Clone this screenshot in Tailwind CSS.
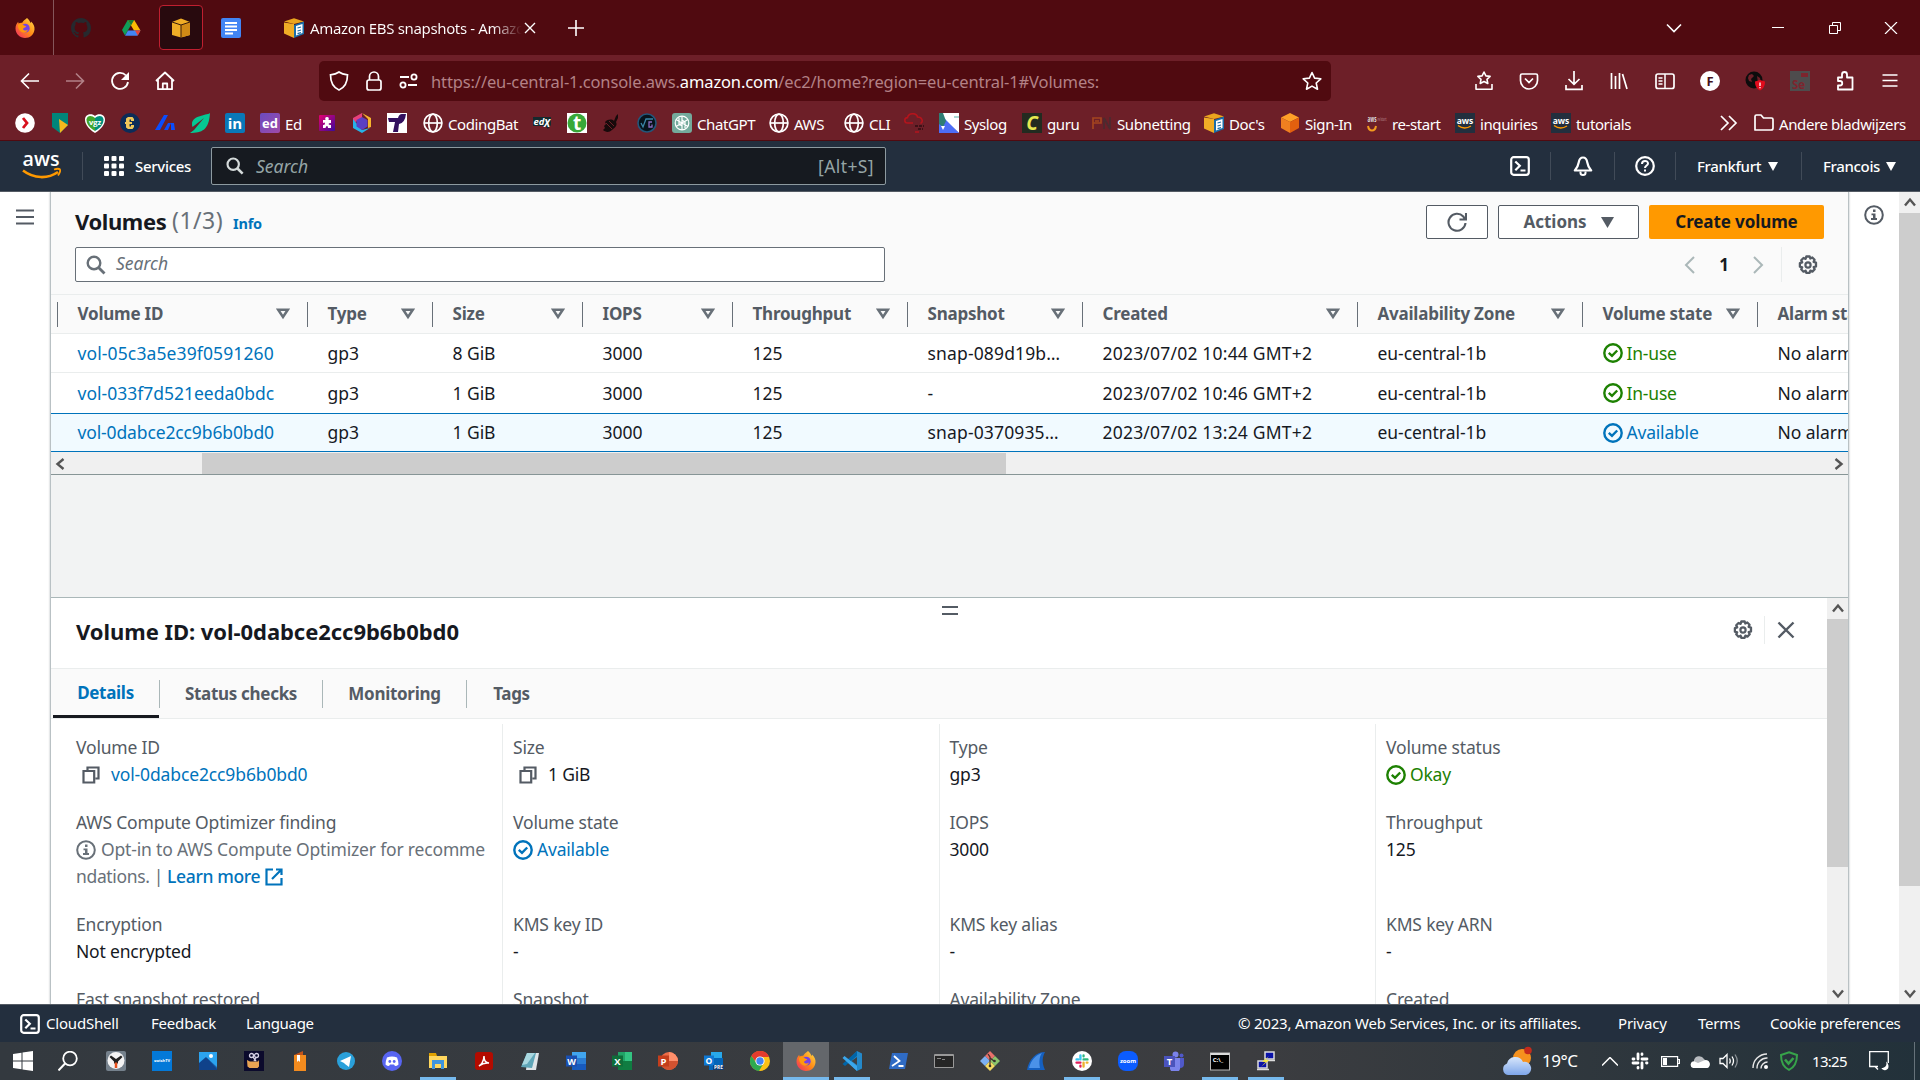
<!DOCTYPE html>
<html lang="en">
<head>
<meta charset="utf-8">
<title>Volumes | EC2 Management Console</title>
<script src="https://cdn.jsdelivr.net/npm/@tailwindcss/browser@4"></script>
</head>
<body class="w-[1920px] h-[1080px] overflow-hidden flex flex-col bg-white text-[#16191f] font-['Noto_Sans','Open_Sans',sans-serif] text-[17px]">

<svg class="absolute w-0 h-0">
  <defs>
    <linearGradient id="ff" x1="1" y1="0" x2="0" y2="1"><stop offset="0" stop-color="#ffe14a"/><stop offset=".5" stop-color="#ff8a16"/><stop offset="1" stop-color="#f0246b"/></linearGradient>
    <linearGradient id="pk" x1="0" y1="0" x2="1" y2="1"><stop offset="0" stop-color="#e6006f"/><stop offset="1" stop-color="#3a0a9c"/></linearGradient>
    <linearGradient id="cl" x1="0" y1="0" x2="0" y2="1"><stop offset="0" stop-color="#d7e6fb"/><stop offset="1" stop-color="#7ea6ea"/></linearGradient>
    <linearGradient id="ed" x1="0" y1="0" x2="1" y2="1"><stop offset="0" stop-color="#6a4bc0"/><stop offset="1" stop-color="#a04aa8"/></linearGradient>
  </defs>
  <symbol id="firefox" viewBox="0 0 20 20"><path fill="url(#ff)" d="M12 0c2 2 3 3 3.500 5C16 4.500 16 4 16 3.500c2.500 2 3.800 5 3.500 8C19 16.500 15 20 10 20S.5 16 .5 10.500C.5 8 1.500 5.500 3.200 3.800L3.500 5.500C4.500 4.800 6 4.500 7.200 4.800 8 3 10 1.500 12 0z"/><circle cx="10.300" cy="10.200" r="4.400" fill="#7542e5"/><path fill="#ff980e" d="M3 7c2-1.500 4.500-1 6 .5 1.200.2 2 .7 2.200 1.300-1.200 1-2.600.8-3.200 2.200.6 1.800 3.400 2 5 .5-.6 3-4 4-6.500 2.500C4 12.500 2.800 10 3 7z"/></symbol>
  <symbol id="github" viewBox="0 0 16 16"><path fill="#26292e" d="M8 0C3.580 0 0 3.580 0 8c0 3.540 2.290 6.530 5.470 7.590.4.070.55-.17.55-.38 0-.19-.01-.82-.01-1.490-2.010.37-2.530-.49-2.690-.94-.09-.23-.48-.94-.82-1.130-.28-.15-.68-.52-.01-.53.63-.01 1.080.58 1.230.82.72 1.210 1.870.87 2.330.66.070-.52.28-.87.51-1.070-1.780-.2-3.640-.89-3.640-3.950 0-.87.31-1.590.82-2.150-.08-.2-.36-1.020.080-2.120 0 0 .67-.21 2.200.82.64-.18 1.320-.27 2-.27s1.360.09 2 .27c1.530-1.040 2.200-.82 2.200-.82.44 1.100.16 1.920.08 2.120.51.56.82 1.270.82 2.150 0 3.070-1.870 3.750-3.650 3.950.29.25.54.73.54 1.480 0 1.070-.01 1.930-.01 2.200 0 .21.15.46.55.38A8.010 8.010 0 0016 8c0-4.420-3.580-8-8-8z"/></symbol>
  <symbol id="drive" viewBox="0 0 20 20"><path fill="#0f9d58" d="M6.700 2 1 12l3 5.500L10 7z"/><path fill="#fbbc04" d="M6.700 2h6.500L19.500 12.500H13z"/><path fill="#4285f4" d="M7 12.500h12.500L16.500 17.700H4z"/><path fill="#ea4335" d="M14 12.500h5.500l-2.700 5z"/><path fill="#188038" d="M6.700 2h6.500L10 7.500z"/></symbol>
  <symbol id="box" viewBox="0 0 20 20"><path fill="#f0ad26" d="M1 4 10 .5 19 4v13l-9 2.500L1 17z"/><path fill="#d08a16" d="m10 7 9-3v13l-9 2.500z"/><path fill="none" stroke="#3a1d0c" d="m1 4 9 3 9-3M10 7v13"/></symbol>
  <symbol id="boxdoc" viewBox="0 0 20 20"><path fill="#f0ad26" d="M0 4.500v11L10 20V6z"/><path fill="#eba51e" d="M0 3.500 10 .2l10 3.300L10 6z"/><path fill="#1b6ea8" d="m10 7 10-3.500V16L10 20z"/><path fill="#fff" d="m12 8 6.500-2v9L12 17.500z"/><path stroke="#1b6ea8" stroke-width="1.200" d="m13.500 10 3.500-1m-3.500 4 3.500-1m-3.500 3.600 3.500-1"/></symbol>
  <symbol id="gdoc" viewBox="0 0 20 20"><rect width="20" height="20" rx="2" fill="#4285f4"/><path stroke="#fff" stroke-width="2" d="M4 5h12M4 8.500h12M4 12h12M4 15.500h8"/></symbol>
  <symbol id="check" viewBox="0 0 20 20"><circle cx="10" cy="10" r="8.700" fill="none" stroke="currentColor" stroke-width="2.400"/><path fill="none" stroke="currentColor" stroke-width="2.400" d="m5.800 9.800 3.200 3 5.200-5.300"/></symbol>
  <symbol id="gear" viewBox="0 0 20 20"><path fill="none" stroke="currentColor" stroke-width="2.300" stroke-linejoin="round" d="M8.300 1.500h3.400l.6 2 2-1 2.300 2.300-1 2 2.400.8v3.800l-2.300.8 1 2-2.300 2.400-2-1-.8 2.300H8.300l-.7-2.200-2.100 1-2.300-2.400 1-2L1.900 11.700V8.100l2.300-.8-1-2L5.500 3l2.100.9z"/><circle cx="10" cy="10" r="2.600" fill="none" stroke="currentColor" stroke-width="2.200"/></symbol>
  <symbol id="info" viewBox="0 0 20 20"><circle cx="10" cy="10" r="8.800" fill="none" stroke="currentColor" stroke-width="2"/><path fill="currentColor" d="M9 4.500h2.500V7H9zM7.500 8.500h4V13H13v2H7v-2h2v-2.800H7.500z"/></symbol>
  <symbol id="copy" viewBox="0 0 18 18"><path fill="none" stroke="currentColor" stroke-width="2.200" d="M5.500 4.500V1.500h11v11h-3M1.500 5h10.700v11.500H1.500z"/></symbol>
  <symbol id="term" viewBox="0 0 20 20"><rect x="1.200" y="1.200" width="17.600" height="17.600" rx="2.500" fill="none" stroke="#fff" stroke-width="2.200"/><path fill="none" stroke="#fff" stroke-width="2.200" d="m5.300 5.500 4.500 4.300-4.500 4.400M10.500 14.500h5"/></symbol>
  <symbol id="lens" viewBox="0 0 20 20"><circle cx="8" cy="8" r="6.300" fill="none" stroke="currentColor" stroke-width="2.400"/><path stroke="currentColor" stroke-width="2.800" d="m12.500 12.500 6 6"/></symbol>
  <symbol id="sort" viewBox="0 0 14 12"><path fill="none" stroke="currentColor" stroke-width="2.500" d="M2.200 1.800h9.600L7 9z"/></symbol>
  <symbol id="up" viewBox="0 0 12 10"><path fill="none" stroke="#555" stroke-width="2.400" d="M1 8.500 6 2.500l5 6"/></symbol>
  <symbol id="globe" viewBox="0 0 20 20"><g fill="none" stroke="#fff" stroke-width="1.700"><circle cx="10" cy="10" r="8.900"/><ellipse cx="10" cy="10" rx="4.300" ry="8.900"/><path d="M1 10h18"/></g></symbol>
  <symbol id="slack" viewBox="0 0 20 20"><g stroke-width="3" stroke-linecap="round"><path stroke="#36c5f0" d="M8 3v5M3 8h2"/><path stroke="#2eb67d" d="M12 8h5M12 3v1"/><path stroke="#ecb22e" d="M12 12v5M16 12h1"/><path stroke="#e01e5a" d="M3 12h5M8 16v1"/></g></symbol>
</svg>

<!-- Tab strip -->
<header class="h-[55px] shrink-0 bg-[#500a10] flex items-center text-white">
  <div class="w-[54px] h-full border-r border-[#85565a] flex items-center justify-center shrink-0 pr-1"><svg class="w-5 h-5"><use href="#firefox"/></svg></div>
  <div class="w-[54px] flex justify-center"><svg class="w-5 h-5"><use href="#github"/></svg></div>
  <div class="w-[46px] flex justify-center"><svg class="w-5 h-5"><use href="#drive"/></svg></div>
  <div class="w-[44px] h-[45px] ml-[5px] rounded-[4px] border border-[#c01f30] bg-[#280a0e] flex items-center justify-center"><svg class="w-[20px] h-[20px]"><use href="#box"/></svg></div>
  <div class="w-[56px] flex justify-center"><svg class="w-5 h-5"><use href="#gdoc"/></svg></div>
  <div class="ml-[25px] w-[252px] flex items-center">
    <svg class="w-5 h-5 shrink-0"><use href="#boxdoc"/></svg>
    <span class="ml-[6px] mt-[2px] w-[212px] overflow-hidden whitespace-nowrap text-[15px] tracking-[-0.350px] bg-gradient-to-r from-white from-86% to-transparent to-100% bg-clip-text text-transparent">Amazon EBS snapshots - Amazo</span>
    <svg class="w-3 h-3 ml-[2px] shrink-0" viewBox="0 0 12 12"><path stroke="#fff" stroke-width="1.400" d="m1 1 10 10M11 1 1 11"/></svg>
  </div>
  <svg class="w-4 h-4 ml-[32px]" viewBox="0 0 16 16"><path stroke="#fff" stroke-width="1.600" d="M8 0v16M0 8h16"/></svg>
  <div class="ml-auto flex items-center pr-[22px]">
    <svg class="w-4 h-4" viewBox="0 0 16 16"><path fill="none" stroke="#fff" stroke-width="1.600" d="m1 4.500 7 7 7-7"/></svg>
    <svg class="w-3 h-3 ml-[90px]" viewBox="0 0 12 12"><path stroke="#fff" d="M0 5.500h12"/></svg>
    <svg class="w-3 h-3 ml-[45px]" viewBox="0 0 12 12"><path fill="none" stroke="#fff" d="M.5 3.500h8v8h-8zM3.500 3.500v-3h8v8h-3"/></svg>
    <svg class="w-[14px] h-3 ml-[43px]" viewBox="0 0 14 12"><path stroke="#fff" stroke-width="1.200" d="m1 0 12 12M13 0 1 12"/></svg>
  </div>
</header>

<!-- Address bar -->
<div class="h-[51px] shrink-0 bg-[#6d1f28] flex items-center text-white">
  <div class="flex items-center gap-[25px] pl-[20px] w-[319px]">
    <svg class="w-5 h-5" viewBox="0 0 20 20"><path fill="none" stroke="#fff" stroke-width="1.600" d="M19 10H2m7-7.500L1.500 10 9 17.500"/></svg>
    <svg class="w-5 h-5" viewBox="0 0 20 20"><path fill="none" stroke="#b28087" stroke-width="1.600" d="M1 10h17m-7-7.500 7.500 7.500-7.500 7.500"/></svg>
    <svg class="w-5 h-5" viewBox="0 0 20 20"><path fill="none" stroke="#fff" stroke-width="1.800" d="M18 11a8 8 0 1 1-2-6.500"/><path fill="#fff" d="M19 1v8h-8z"/></svg>
    <svg class="w-5 h-5" viewBox="0 0 20 20"><path fill="none" stroke="#fff" stroke-width="1.800" stroke-linejoin="round" d="m1 10 9-8.500 9 8.500M3 8.500v9.700h14V8.500M7.800 18v-5.500h4.400V18"/></svg>
  </div>
  <div class="w-[1012px] h-10 rounded-[5px] bg-[#500a10] flex items-center pl-[10px] pr-[9px]">
    <svg class="w-5 h-5" viewBox="0 0 20 20"><path fill="none" stroke="#fff" stroke-width="1.700" d="M10 1c2.500 1.800 5.500 2.500 8.500 2.800C18.500 11 16 16.500 10 19 4 16.500 1.500 11 1.500 3.800 4.500 3.500 7.500 2.800 10 1z"/></svg>
    <svg class="w-5 h-5 ml-[15px]" viewBox="0 0 20 20"><path fill="none" stroke="#fff" stroke-width="1.700" d="M5.500 9V5.500a4.500 4.500 0 0 1 9 0V9"/><rect x="3" y="9" width="14" height="10" rx="2" fill="none" stroke="#fff" stroke-width="1.700"/></svg>
    <svg class="w-5 h-5 ml-[15px]" viewBox="0 0 20 20"><g fill="none" stroke="#fff" stroke-width="1.800"><path d="M1 6h9M9 14h9"/><circle cx="15" cy="6" r="2.600"/><circle cx="4" cy="14" r="2.600"/></g></svg>
    <span class="ml-[12px] mt-[3px] whitespace-nowrap text-[16.500px] tracking-[-0.120px] text-[#b38186]">https://eu-central-1.console.aws.<span class="text-white">amazon.com</span>/ec2/home?region=eu-central-1#Volumes:</span>
    <svg class="w-5 h-5 ml-auto" viewBox="0 0 20 20"><path fill="none" stroke="#fff" stroke-width="1.600" stroke-linejoin="round" d="m10 1.500 2.600 5.600 6.200.7-4.600 4.200 1.300 6.200-5.500-3.100-5.500 3.100 1.300-6.200L1.200 7.800l6.200-.7z"/></svg>
  </div>
  <div class="ml-auto flex items-center gap-[25.100px] pr-[20px]">
    <svg class="w-5 h-5" viewBox="0 0 20 20"><path fill="none" stroke="#fff" stroke-width="1.600" stroke-linejoin="round" d="m10 1 1.900 3.900 4.200.5-3.100 2.900.8 4.200L10 10.500l-3.800 2 .8-4.200-3.100-2.900 4.200-.5zM2 13v5.300h16V13"/></svg>
    <svg class="w-5 h-5" viewBox="0 0 20 20"><path fill="none" stroke="#fff" stroke-width="1.700" d="M1.500 4.500q0-1.500 1.500-1.500h14q1.500 0 1.500 1.500v5a8.500 8.500 0 0 1-17 0zM6 7.500l4 4 4-4"/></svg>
    <svg class="w-5 h-5" viewBox="0 0 20 20"><path fill="none" stroke="#fff" stroke-width="1.700" d="M10 0v13M4.500 8l5.500 5.300L15.500 8M2 14v4.300h16V14"/></svg>
    <svg class="w-5 h-5" viewBox="0 0 20 20"><path fill="none" stroke="#fff" stroke-width="1.700" d="M2.500 2v16M6.500 5v13M10.500 2v16M13.500 3l4.500 15"/></svg>
    <svg class="w-5 h-5" viewBox="0 0 20 20"><rect x="1" y="3" width="18" height="14.500" rx="2" fill="none" stroke="#fff" stroke-width="1.700"/><path stroke="#fff" stroke-width="1.500" d="M10 3v14M3.500 7h4M3.500 10h4M3.500 13h4"/></svg>
    <svg class="w-5 h-5" viewBox="0 0 20 20"><circle cx="10" cy="10" r="10" fill="#fff"/><text x="10" y="14.800" text-anchor="middle" font-size="13" font-weight="700" fill="#44101a" font-family="Open Sans">F</text></svg>
    <svg class="w-5 h-5" viewBox="0 0 20 20"><circle cx="9" cy="9" r="8.500" fill="#0c0c0c"/><path fill="#6d1f28" d="m4 4 3-1 2 2-3 3 1 3-3-1-1-3zM12 5l3 2 1 4-3 1z"/><path fill="#e00b1c" d="M10 10.500 15 9l5 1.500c0 4-1.500 7.500-5 9-3.500-1.500-5-5-5-9z"/><path stroke="#fff" stroke-width="1.300" d="M15 11.500v3.500M15 16v1.300"/></svg>
    <svg class="w-5 h-5" viewBox="0 0 20 20"><rect width="20" height="20" fill="#4e4c4d"/><rect x="11" y="2" width="7" height="4" fill="#7d252e"/><text x="2" y="17.500" font-size="11.500" font-weight="700" fill="#7d252e" font-family="Open Sans">Se</text></svg>
    <svg class="w-5 h-5" viewBox="0 0 20 20"><path fill="none" stroke="#fff" stroke-width="1.800" stroke-linejoin="round" d="M7 6.500V3.500a2.500 2.500 0 0 1 5 0v3h5.500V18.500H3V14.500h2a2 2 0 0 0 0-4.500H3V6.500z"/></svg>
    <svg class="w-5 h-5" viewBox="0 0 20 20"><path stroke="#fff" stroke-width="1.700" d="M2.500 4h15M2.500 9.500h15M2.500 15h15"/></svg>
  </div>
</div>

<!-- Bookmarks -->
<div id="bookmarks" class="h-[35px] shrink-0 bg-[#6d1f28] border-b border-[#500a10] flex items-center pl-[15px] text-white text-[15px] tracking-[-0.400px]"></div>

<!-- AWS navigation -->
<nav class="h-[51px] shrink-0 bg-[#232f3e] border-b border-[#545b64] flex items-center text-white text-[15px]">
  <svg class="w-10 h-7 ml-[22px]" viewBox="0 0 40 28"><text x="0.500" y="13.500" font-size="20" textLength="37" lengthAdjust="spacingAndGlyphs" fill="#fff" font-family="Open Sans" font-weight="600">aws</text><path fill="none" stroke="#f90" stroke-width="2.600" d="M1 18.500c11 8.500 25 8.500 35 1.500"/><path fill="none" stroke="#f90" stroke-width="1.800" d="M32 17.500c3-1 5-1 6 0 .5 1.500-.5 4-2 6"/></svg>
  <div class="w-px h-7 bg-[#414b58] ml-[20px]"></div>
  <svg class="w-5 h-5 ml-[21px]" viewBox="0 0 20 20"><g fill="#fff"><rect width="5" height="5" rx="1"/><rect x="7.500" width="5" height="5" rx="1"/><rect x="15" width="5" height="5" rx="1"/><rect y="7.500" width="5" height="5" rx="1"/><rect x="7.500" y="7.500" width="5" height="5" rx="1"/><rect x="15" y="7.500" width="5" height="5" rx="1"/><rect y="15" width="5" height="5" rx="1"/><rect x="7.500" y="15" width="5" height="5" rx="1"/><rect x="15" y="15" width="5" height="5" rx="1"/></g></svg>
  <span class="ml-[11px] w-[66px] mt-px font-medium tracking-[-0.300px]">Services</span>
  <div class="ml-[10px] w-[675px] h-[38px] rounded-[2px] border border-[#8d9aa0] bg-[#161a20] flex items-center pl-[14px] pr-[11px] text-[17.500px] text-[#95a5a6]">
    <svg class="w-[18px] h-[18px] text-[#d5dbdb]"><use href="#lens" width="18" height="18"/></svg>
    <span class="ml-[12px] italic">Search</span>
    <span class="ml-auto tracking-[0.400px]">[Alt+S]</span>
  </div>
  <div class="ml-auto flex items-center h-full font-medium tracking-[-0.350px]">
    <svg class="w-5 h-5"><use href="#term"/></svg>
    <div class="w-px h-7 bg-[#414b58] ml-[20px]"></div>
    <svg class="w-5 h-5 ml-[22px]" viewBox="0 0 20 20"><path fill="none" stroke="#fff" stroke-width="2.200" stroke-linejoin="round" d="M10 1.500c-2.500 0-3.800 2-4.300 5C5.200 10 4 12 1.800 14.500h16.400C16 12 14.800 10 14.300 6.500c-.5-3-1.800-5-4.300-5z"/><path fill="none" stroke="#fff" stroke-width="2" d="M7.500 15.500v1.500q0 2 2.500 2t2.500-2v-1.500"/></svg>
    <div class="w-px h-7 bg-[#414b58] ml-[21px]"></div>
    <svg class="w-5 h-5 ml-[20px]" viewBox="0 0 20 20"><circle cx="10" cy="10" r="8.800" fill="none" stroke="#fff" stroke-width="2.200"/><path fill="none" stroke="#fff" stroke-width="2" d="M7 8c0-4 6-4 6-.5 0 2-3 2-3 4.500M10 13.500v2"/></svg>
    <div class="w-px h-7 bg-[#414b58] ml-[20px]"></div>
    <span class="ml-[21px] w-[66px] mt-px">Frankfurt</span><svg class="w-[10px] h-[9px] ml-[5px]" viewBox="0 0 10 9"><path fill="#fff" d="M0 0h10L5 9z"/></svg>
    <div class="w-px h-7 bg-[#414b58] ml-[23px]"></div>
    <span class="ml-[21px] w-[58px] mt-px">Francois</span><svg class="w-[10px] h-[9px] ml-[5px] mr-[24px]" viewBox="0 0 10 9"><path fill="#fff" d="M0 0h10L5 9z"/></svg>
  </div>
</nav>

<!-- Console -->
<div class="h-[812px] shrink-0 flex overflow-hidden text-[17px]">
  <aside class="w-[50px] shrink-0 flex justify-center pt-[17px]">
    <svg class="w-[18px] h-4" viewBox="0 0 18 16"><path stroke="#545b64" stroke-width="2" d="M0 1.500h18M0 8h18M0 14.500h18"/></svg>
  </aside>

  <main class="w-[1799px] shrink-0 border-x border-[#b9c1c4] bg-[#f2f3f3] flex flex-col overflow-hidden shadow-[0_0_2px_rgba(0,28,36,.3)]">
    <section class="shrink-0 bg-[#fafafa] border-b border-[#879596]">
      <div class="h-[102px] pl-[24px] pr-[24px] pt-[13px] flex flex-col">
        <div class="flex items-center h-[34px]">
          <h1 class="text-[22px] font-bold tracking-[-0.400px] leading-none w-[97px] mb-[3px]">Volumes</h1>
          <span class="text-[23px] leading-none text-[#687078] w-[61px] mb-[3px] tracking-[0.500px]">(1/3)</span>
          <a class="text-[14.500px] font-bold text-[#0073bb] mt-[4px] tracking-[-0.200px]">Info</a>
          <div class="ml-auto flex gap-[10px] font-bold text-[#545b64]">
            <button class="w-[62px] h-[34px] border border-[#545b64] rounded-[2px] bg-white flex items-center justify-center"><svg class="w-5 h-5" viewBox="0 0 20 20"><path fill="none" stroke="currentColor" stroke-width="2.100" d="M18.500 11a8.500 8.500 0 1 1-2.200-6.500l1.500 2.500M19 1v6.500h-6.500"/></svg></button>
            <button class="w-[141px] h-[34px] border border-[#545b64] rounded-[2px] bg-white flex items-center justify-center gap-[14px]">Actions<svg class="w-[13px] h-[11px]" viewBox="0 0 13 11"><path fill="currentColor" d="M0 0h13L6.500 11z"/></svg></button>
            <button class="w-[175px] h-[34px] rounded-[2px] bg-[#ff9900] text-[#16191f] tracking-[-0.100px]">Create volume</button>
          </div>
        </div>
        <div class="flex items-center h-[35px] mt-[8px]">
          <div class="w-[810px] h-[35px] border border-[#687078] rounded-[2px] bg-white flex items-center pl-[10px] text-[#687078]"><svg class="w-5 h-5"><use href="#lens"/></svg><span class="italic ml-[10px] mb-[2px] text-[17.500px]">Search</span></div>
          <svg class="w-[11px] h-[18px] ml-auto" viewBox="0 0 11 18"><path fill="none" stroke="#aab7b8" stroke-width="2" d="M10 1 2 9l8 8"/></svg>
          <span class="font-bold w-[58px] text-center">1</span>
          <svg class="w-[11px] h-[18px]" viewBox="0 0 11 18"><path fill="none" stroke="#aab7b8" stroke-width="2" d="m1 1 8 8-8 8"/></svg>
          <div class="w-px h-[35px] bg-[#eaeded] ml-[17px]"></div>
          <svg class="w-5 h-5 text-[#545b64] ml-[16px] mr-[6px]"><use href="#gear"/></svg>
        </div>
      </div>
      <div id="thead" class="h-[40px] border-y border-[#eaeded] flex items-center pl-[6px] font-bold text-[#545b64] overflow-hidden tracking-[-0.220px]"></div>
      <div id="tbody" class="text-[17.500px]"></div>
      <div class="h-[22px] pt-px bg-[#f0f0f0] flex items-center">
        <svg class="w-3 h-[10px] -rotate-90 ml-[3px]"><use href="#up"/></svg>
        <div class="ml-[136px] w-[804px] h-full bg-[#cdcdcd]"></div>
        <svg class="w-3 h-[10px] rotate-90 ml-auto mr-[3px]"><use href="#up"/></svg>
      </div>
    </section>

    <section class="mt-[122px] flex-1 min-h-0 border-t border-[#aab7b8] bg-white flex">
      <div class="w-[1776px] shrink-0 flex flex-col relative">
        <svg class="absolute left-[891px] top-[8px] w-4 h-[9px]" viewBox="0 0 16 9"><path stroke="#545b64" stroke-width="2" d="M0 1h16M0 8h16"/></svg>
        <div class="h-[70px] shrink-0 flex items-center pl-[25px] pr-[32px]">
          <h2 class="text-[22px] font-bold tracking-[-0.050px] whitespace-nowrap mb-[4px]">Volume ID: vol-0dabce2cc9b6b0bd0</h2>
          <svg class="w-5 h-5 ml-auto mb-[6px] text-[#545b64]"><use href="#gear"/></svg>
          <div class="w-px h-7 bg-[#eaeded] ml-[11px] mb-[6px]"></div>
          <svg class="w-[18px] h-[18px] ml-[12px] mb-[6px]" viewBox="0 0 18 18"><path stroke="#545b64" stroke-width="2.400" d="m1.500 1.500 15 15M16.500 1.500l-15 15"/></svg>
        </div>
        <div class="h-[51px] shrink-0 border-y border-[#eaeded] bg-[#fafafa] flex items-center pl-[2px] font-bold text-[#545b64] text-[17px] tracking-[-0.300px]">
          <div class="relative w-[106px] h-[49px] flex items-center justify-center text-[#0073bb] border-b-[3px] border-[#16191f] pt-[2px] pr-px">Details</div>
          <div class="w-[163px] h-[28px] flex items-center justify-center border-l border-[#aab7b8]">Status checks</div>
          <div class="w-[144px] h-[28px] flex items-center justify-center border-l border-[#aab7b8]">Monitoring</div>
          <div class="w-[90px] h-[28px] flex items-center justify-center border-l border-[#aab7b8]">Tags</div>
        </div>
        <div id="details" class="flex-1 min-h-0 overflow-hidden flex pl-[25px] pt-[5px] text-[17.500px]"></div>
      </div>
      <div class="w-[21px] shrink-0 bg-[#f0f0f0] flex flex-col items-center">
        <svg class="w-3 h-[10px] mt-[5px]"><use href="#up"/></svg>
        <div class="w-full h-[248px] mt-[6px] bg-[#cdcdcd]"></div>
        <svg class="w-3 h-[10px] mt-auto mb-[5px] rotate-180"><use href="#up"/></svg>
      </div>
    </section>
  </main>

  <aside class="w-[50px] shrink-0 flex justify-center pt-[13px] text-[#545b64]"><svg class="w-5 h-5"><use href="#info"/></svg></aside>
  <div class="w-[21px] shrink-0 bg-[#f0f0f0] flex flex-col items-center">
    <svg class="w-3 h-[10px] mt-[5px]"><use href="#up"/></svg>
    <div class="w-full h-[673px] mt-[6px] bg-[#cdcdcd]"></div>
    <svg class="w-3 h-[10px] mt-auto mb-[5px] rotate-180"><use href="#up"/></svg>
  </div>
</div>

<!-- Console footer -->
<footer class="h-[38px] shrink-0 bg-[#232f3e] border-t border-[#545b64] flex items-center pl-[20px] pr-[20px] text-white text-[15px] tracking-[-0.200px] whitespace-nowrap">
  <svg class="w-5 h-5 mr-[6px]"><use href="#term"/></svg>
  <span class="w-[105px]">CloudShell</span><span class="w-[95px]">Feedback</span><span class="tracking-[-0.300px]">Language</span>
  <span class="ml-auto w-[380px]">© 2023, Amazon Web Services, Inc. or its affiliates.</span><span class="w-[80px]">Privacy</span><span class="w-[72px]">Terms</span><span class="w-[130px] tracking-[-0.280px]">Cookie preferences</span>
</footer>

<!-- Taskbar -->
<div class="h-[38px] shrink-0 bg-gradient-to-r from-[#33393f] via-[#3c3d40] via-65% to-[#22313a] flex items-center text-white">
  <div id="taskbar" class="flex h-full"></div>
  <div class="ml-auto flex items-center h-full text-[17px]">
    <svg class="w-[30px] h-[30px] mr-[10px]" viewBox="0 0 30 30"><circle cx="20" cy="12" r="9" fill="#f6921e"/><circle cx="26" cy="4.500" r="3.800" fill="#c42b1c"/><path fill="url(#cl)" d="M6 29a6 6 0 0 1-1-11.500 8.500 8.500 0 0 1 16-1.500A6.500 6.500 0 0 1 24 29z"/></svg>
    <span class="w-[60px] tracking-[-0.500px]">19°C</span>
    <svg class="w-4 h-[9px]" viewBox="0 0 16 9"><path fill="none" stroke="#fff" stroke-width="1.500" d="m0 8.500 8-8 8 8"/></svg>
    <svg class="w-[18px] h-[18px] ml-[13px]" viewBox="0 0 18 18"><g stroke="#fff" stroke-width="2.800" stroke-linecap="round"><path d="M7 2v5M2 7h1M11 7h5M11 2v.5M11 11v5M16 11h-.5M2 11h5M7 16v-.5"/></g></svg>
    <svg class="w-[19px] h-[11px] ml-[12px]" viewBox="0 0 19 11"><path fill="none" stroke="#fff" stroke-width="1.200" d="M.6.600h16v9.800H.6zM17 3.500h1.400v4H17"/><path fill="#fff" d="M2 2h4v7H2z"/></svg>
    <svg class="w-5 h-[13px] ml-[10px]" viewBox="0 0 20 13"><path fill="#b9bcc0" d="M4 5a5.500 5.500 0 0 1 10-1l3 3-13 5z"/><path fill="#fff" d="M3 13a3.500 3.500 0 0 1 1-6.800L8 8l6-2.500a4 4 0 0 1 3.500 7.500z"/></svg>
    <svg class="w-5 h-4 ml-[9px]" viewBox="0 0 20 16"><path fill="none" stroke="#fff" stroke-width="1.300" d="M1 5.500h3l4-4v13l-4-4H1zM10.500 5.500q1.500 2.500 0 5M13 3.500q3 4.500 0 9"/><path fill="none" stroke="#8b9196" stroke-width="1.300" d="M16 1.500q4.500 6.500 0 13"/></svg>
    <svg class="w-4 h-4 ml-[13px]" viewBox="0 0 16 16"><g fill="none" stroke="#e8e8e8" stroke-width="1.400"><path d="M1 15A14 14 0 0 1 15 1M5 15.500A10 10 0 0 1 15.500 5M9 15.500A6.500 6.500 0 0 1 15.500 9"/></g><circle cx="14" cy="14" r="2" fill="#fff"/></svg>
    <svg class="w-[18px] h-5 ml-[12px]" viewBox="0 0 18 20"><path fill="none" stroke="#37a34a" stroke-width="2" d="M9 1.200 17 4c0 7-2 12-8 14.800C3 16 1 11 1 4z"/><path fill="none" stroke="#37a34a" stroke-width="2.600" d="m5 8.500 3.500 4L13.500 7"/></svg>
    <span class="ml-[14px] w-[57px] text-[15px] tracking-[-0.700px]">13:25</span>
    <svg class="w-5 h-5" viewBox="0 0 20 20"><path fill="none" stroke="#fff" stroke-width="1.300" d="M9 15.500H.700V.700h18.600V12M6 15.500l3 3"/><path fill="#fff" d="M17 10.500c1.500 4-1 6.500-4.500 6.500 1 3 6.500 3 7 -1 .2-2.500-1-4.500-2.500-5.500z"/></svg>
    <div class="w-px h-full bg-[#66727a] ml-[25px] mr-[5px]"></div>
  </div>
</div>

<script>
const txt = (s, x, y, size, fill, extra = '') => `<text x="${x}" y="${y}" font-size="${size}" fill="${fill}" letter-spacing="0" font-family="Open Sans, sans-serif" font-weight="700" text-anchor="middle" ${extra}>${s}</text>`;
const art = {
  chev: '<circle cx="10" cy="10" r="9.800" fill="#fff"/><path fill="none" stroke="#d8101c" stroke-width="2.800" d="m8 5 4 5-4 5"/>',
  pennant: '<path fill="#00857a" d="M2 0h16v12l-8 8-8-6z"/><path fill="#f5b81c" d="m9 6 9 6-8 8z"/>',
  heart: '<path fill="#fff" d="M10 20C2 15 0 10 0 6.500 0 1 7 0 10 3c3-3 10-2 10 3.500 0 3.500-2 8.500-10 13.500z"/><path fill="#42a62a" d="M10 18C3 14 1.500 10 1.500 6.500 2 2 7 2 10 5z"/><path fill="#008f7c" d="M10 18c7-4 8.500-8 8.500-11.500C18 2 13 2 10 5z"/>' + txt('vgz', 10, 11.5, 7.5, '#fff'),
  bit: '<circle cx="10" cy="10" r="10" fill="#0c2c58"/><path fill="#efc75a" d="M8 4h4.500L14 6v2h-3V6.500H9.500V9H12v2H9.500v2.500H11V12h3v2l-1.500 2H8l-2-1.500V11H5V9h1V5.500z"/>',
  slashes: '<path fill="#0a4dff" d="M9 2h4L5 17H0zM13 10h3l-3 7h-4zM16 10h3l1 7h-4z"/>',
  leaf: '<path fill="#05c793" d="M20 0c-1 2-18 2-18 11 0 1 0 2 .5 3L14 5 4 17l-4 3c12 0 19-3 20-20z"/>',
  lin: '<rect width="20" height="20" rx="2" fill="#0a78b8"/>' + txt('in', 10, 16, 15, '#fff'),
  ed: '<rect width="20" height="20" rx="2" fill="url(#ed)"/>' + txt('ed', 10, 14.5, 13, '#fff'),
  puzzle: '<rect x="2" y="2" width="16" height="16" rx="1" fill="url(#pk)"/><path fill="#fff" d="M6 7h2.500q-1-3 1.500-3t1.500 3H14v3q-2.500 0-2.500 1t2.500 1v3h-3q0-2-1-2t-1.500 2H6v-3q2 0 2-1.500T6 10z"/>',
  hex: '<path fill="#e8407c" d="M10 0 1 5v5l9-4z"/><path fill="#f7b52c" d="m10 0 9 5v9l-3 1V6z"/><path fill="#27b3e8" d="M1 6v9l9 5 8-5-8 2z"/><path fill="#5b3fc4" d="m10 4 5.500 3v6.500L10 17l-5.500-3.500V7z"/>',
  zed: '<rect width="20" height="20" fill="#fff"/><path fill="#33105f" d="M1 5h10q1-4 4-4h4q-1 9-7 10l-1 8H6l2-10H2z"/>',
  edx: '<path fill="#152a2e" d="M1 4h18v8l-3 4-3-3H1z"/>' + txt('ed', 7, 12, 9.5, '#fff', 'font-style="italic"') + txt('X', 15, 13.5, 10, '#fff', 'font-style="italic"'),
  tt: '<rect width="20" height="20" fill="#fff"/><circle cx="10" cy="10" r="9.500" fill="#38a838"/>' + txt('t', 10, 16.5, 19, '#fff'),
  bee: '<path fill="#170a0b" d="M4 9c3-3 7-3 9-1l2-5 2-2v4l-2 4c2 4-2 6-4 8-3 3-7 2-9 0l2-2-1-2 2-2z"/><path stroke="#6d1f28" d="M5 10l6 6M8 8l5 5"/>',
  root: '<circle cx="10" cy="10" r="9" fill="#07141c" stroke="#22567a" stroke-width="1.600"/><path fill="none" stroke="#3b86a8" stroke-width="1.300" d="m4 10 2 4 3-8h7"/><path fill="none" stroke="#8c6ac0" stroke-width="1.300" d="M15 9h-3v5h3v-2.500"/>',
  gpt: '<rect width="20" height="20" rx="3" fill="#74aa9c"/><g fill="none" stroke="#fff" stroke-width="1.200"><circle cx="10" cy="10" r="6.800"/><path d="M10 3v7l6 3.500M10 17v-7L4 6.500M4 13.500l6-3.500 6-3.500M7 5v6l3 2M13 15V9l-3-2"/></g>',
  globe: '<use href="#globe"/>',
  redcloud: '<path fill="none" stroke="#b5141c" stroke-width="1.600" d="M9 10H3.500a2.700 2.700 0 0 1 0-5.400C4.500-.5 12.500-.5 13.500 4c5 0 6 5 3 6.500"/><path stroke="#3e1016" stroke-width="2" stroke-dasharray="3 1" d="M11 13h9M14 16h5"/><path stroke="#b5141c" stroke-width="1.500" d="M11 19h4"/>',
  syslog: '<path fill="#fff" d="M0 0h20v20L0 2z"/><path fill="#4d6df5" d="M0 0v20h20z"/><path fill="#2f7d74" d="M0 0h4l3 8-3 6-4-3z"/><path fill="#fff" d="M2 13h4l-2 4z"/><path stroke="#8fcac3" stroke-width="1.500" d="M15 4h5"/>',
  guru: '<rect width="20" height="20" fill="#222b20"/>' + txt('C', 10, 17, 19, '#e6e850', 'font-style="italic"'),
  pn: '<path fill="none" stroke="#a4451f" stroke-width="1.700" d="M1 16V5h8v5H1M3 8h4"/><path fill="none" stroke="#4b2b30" stroke-width="1.700" d="M12 16V5l6 11V4"/>',
  boxdoc: '<use href="#boxdoc"/>',
  cube: '<path fill="#ffa028" d="m10 0 9 4.500-9 4.500-9-4.500z"/><path fill="#f08020" d="M1 4.500 10 9v11l-9-5z"/><path fill="#e2600f" d="m19 4.500-9 4.500v11l9-5z"/>',
  restart: txt('aws', 5, 9, 8, '#ddd', 'textLength="9" lengthAdjust="spacingAndGlyphs"') + txt('re/start', 15, 8, 5, '#a46a70', 'textLength="9" lengthAdjust="spacingAndGlyphs"') + '<path fill="none" stroke="#f39a1e" stroke-width="2" d="M1 13c1 6 7 6 8 0"/>',
  aws: '<rect width="20" height="20" fill="#232f3e"/>' + txt('aws', 10, 10.5, 8.5, '#fff') + '<path fill="none" stroke="#f90" stroke-width="1.400" d="M3 12.500c4 3 9 3 13 .5"/>',
  more: '<path fill="none" stroke="#fff" stroke-width="1.700" d="m3 3 7 7-7 7M11 3l7 7-7 7"/>',
  folder: '<path fill="none" stroke="#fff" stroke-width="1.700" stroke-linejoin="round" d="M1 17V3.500Q1 2 2.500 2H7l2.500 3h8Q19 5 19 6.500V15q0 2-2 2z"/>',
  win: '<path fill="#fff" d="m0 3 8.500-1.300v7.800H0zM9.500 1.500 20 0v9.500H9.500zM0 10.500h8.500v7.800L0 17zM9.500 10.500H20V20L9.500 18.500z"/>',
  find: '<circle cx="12" cy="7.500" r="6.800" fill="none" stroke="#fff" stroke-width="1.800"/><path stroke="#fff" stroke-width="2" d="m7.500 12-7 7.500"/>',
  clock: '<rect width="20" height="20" rx="2" fill="#75818c"/><circle cx="10" cy="9.500" r="8.500" fill="#f4f4f4"/><path fill="#222" d="M3.500 6 5 4.500l5 3.500 5-3.500L16.500 6 12 10.500v2H8v-2z"/><path stroke="#e8501c" stroke-width="2.500" d="M10 11.500V17"/>',
  tv: '<rect width="20" height="20" fill="#0479d8"/>' + txt('swishTV', 10, 11, 4, '#fff'),
  photo: '<rect x="1" y="1" width="18" height="18" rx="1" fill="#1c62ac"/><path fill="#2ba3ef" d="M1 1h18v15L9 7l-8 8z"/><path fill="#10428a" d="m1 12 7-6 11 12v1H1z"/><circle cx="13" cy="5" r="2" fill="#fff"/>',
  cup: '<rect width="20" height="20" fill="#0b0a2c"/><path fill="#e8a352" d="m3 9 3 1.500h8L15 9v6.500L13.500 17h-8L3.500 15.500z"/><g fill="none" stroke="#d4d0e4" stroke-width="1.300"><circle cx="7.500" cy="4.500" r="2"/><circle cx="12.500" cy="4.500" r="2"/><path d="m9 6 3 4M12 6.500 10 10"/></g>',
  bkmk: '<path fill="#f38b1e" d="M4 4h12v16H4z"/><path fill="#c4541a" d="m4 4 9-4v4z"/><path fill="#fff" d="M7 4h3v7L8.500 9.500 7 11z"/>',
  tele: '<circle cx="10" cy="10" r="9" fill="#2aa0da"/><path fill="#fff" d="m4 10 11-5-2 11-4-3-1-1z"/>',
  discord: '<circle cx="10" cy="10" r="10" fill="#5865f2"/><path fill="#fff" d="M5 6.500q5-2.200 10 0 1.500 3.500 1.500 7-1.500 1.500-3.500 1.500l-1-1.500H8L7 15q-2 0-3.500-1.500 0-3.500 1.500-7z"/><circle cx="7.800" cy="10.500" r="1.400" fill="#5865f2"/><circle cx="12.200" cy="10.500" r="1.400" fill="#5865f2"/>',
  files: '<path fill="#e0a100" d="M1 2h7l1 3H1z"/><path fill="#ffd75e" d="M1 5h18v12H1z"/><path fill="#3f94dd" d="M4 9h12v9h-3v-5H7v5H4z"/>',
  pdf: '<rect x="1" y="1" width="18" height="18" rx="3" fill="#b30b00"/><path fill="none" stroke="#fff" stroke-width="1.500" d="M5 15c2-1 5-5 5-10 0 5 2 7 5 7-4-.5-7 .5-10 3z"/>',
  note: '<path fill="#dfe5e8" d="M8 2h11l-3 17H6z"/><path fill="#5fa6b8" d="M7 2h9l-4 15-11-1z"/><path fill="#a9d8e0" d="m7 2 8 0-8 11-5 1z"/>',
  word: '<path fill="#41a5ee" d="M6 1h14v6H6z"/><path fill="#2b7cd3" d="M6 7h14v6H6z"/><path fill="#185abd" d="M6 13h14v6H6z"/><rect y="4.500" width="11" height="11" fill="#1a4fb0"/>' + txt('W', 5.5, 13.5, 9, '#fff'),
  excel: '<path fill="#21a366" d="M6 1h7v9H6z"/><path fill="#33c481" d="M13 1h7v9h-7z"/><path fill="#107c41" d="M6 10h14v9H6z"/><rect y="4.500" width="11" height="11" fill="#0f6e3a"/>' + txt('X', 5.5, 13.7, 9.5, '#fff'),
  ppt: '<circle cx="11" cy="10" r="9" fill="#ed6c47"/><path fill="#ff8f6b" d="M11 1a9 9 0 0 1 9 9h-9z"/><path fill="#d35230" d="M2 10h18a9 9 0 0 1-18 0z"/><rect y="4.500" width="11" height="11" fill="#c43e1c"/>' + txt('P', 5.5, 13.5, 9.5, '#fff'),
  outlook: '<path fill="#28a8ea" d="M7 1h11v12H7z"/><path fill="#0364b8" d="M7 7h12v12H5v-5z"/><rect y="4.500" width="10" height="10" fill="#0f78d4"/>' + txt('O', 5, 13, 8.5, '#fff') + '<path fill="#123c72" d="M9 14h11v5H9z"/>' + txt('PRE', 14.5, 18.3, 4.8, '#fff'),
  chrome: '<circle cx="10" cy="10" r="10" fill="#fbc116"/><path fill="#e33b2e" d="M1.300 5A10 10 0 0 1 18.700 5L19 6h-9a4 4 0 0 0-4 5z"/><path fill="#2da94f" d="M1.300 5A10 10 0 0 0 9 20l4.500-7.500a4 4 0 0 1-7-.5z"/><circle cx="10" cy="10" r="4.600" fill="#fff"/><circle cx="10" cy="10" r="3.700" fill="#4285f4"/>',
  firefox: '<use href="#firefox"/>',
  code: '<path fill="#2489ca" d="m15 0 5 2.500v15L15 20 5 10.500z"/><path fill="#0065a9" d="m15 0 0 5L3 15l-2.500-2z"/><path fill="#3ba7ec" d="m.5 7 2-2L15 15v5z"/><path fill="#3c4146" d="M15 6v8L9.500 10z"/>',
  ps: '<path fill="#2f6bc4" d="M4 2h16l-3 16H1z"/><path fill="none" stroke="#fff" stroke-width="1.800" d="m6 5 5.500 5L4 15M10.500 15h5"/>',
  cmd: '<rect y="3" width="20" height="14" rx="1" fill="#999"/><rect x="1" y="5" width="18" height="11" fill="#262626"/><path stroke="#888" d="M3 7.500h4M8 8.500h3"/>',
  git: '<path fill="#e8706a" d="m10 0 5 5-5 5-5-5z"/><path fill="#7cb0f2" d="m5 5 5 5-5 5-5-5z"/><path fill="#8bc46c" d="m15 5 5 5-5 5-5-5z"/><path fill="#f5da62" d="m10 10 5 5-5 5-5-5z"/><path fill="none" stroke="#38302c" stroke-width="1.200" d="M8 3l2 3v9M10 7l4 3"/><circle cx="10" cy="15" r="1.300" fill="#38302c"/><circle cx="14.500" cy="10" r="1.300" fill="#38302c"/>',
  fin: '<path fill="#1560c0" d="M1 19C3 8 10 1 19 1c-2 4-4 9 0 18z"/><path fill="#4b92e8" d="M3 17C5 9 10 4 16 2c-3 4-3 10-2 15z"/>',
  slack: '<circle cx="10" cy="10" r="10" fill="#fff"/><g transform="translate(2.200 2.200) scale(.78)"><use href="#slack" width="20" height="20"/></g>',
  zoom: '<rect width="20" height="20" rx="8" fill="#0b5cff"/>' + txt('zoom', 10, 11.8, 6, '#fff'),
  teams: '<circle cx="11.500" cy="3.500" r="3" fill="#7b83eb"/><circle cx="17.500" cy="4.500" r="2" fill="#5059c9"/><path fill="#7b83eb" d="M6 7h10v8a5 5 0 0 1-10 3z"/><path fill="#5059c9" d="M16 7h4v6q0 4-4 4z"/><rect y="5" width="11" height="11" fill="#4b53bc"/>' + txt('T', 5.5, 14, 9.5, '#fff'),
  cmd2: '<rect x=".5" y="2" width="19" height="17" fill="#000" stroke="#b8b8b8"/><path fill="#dcdcdc" d="M.5 2h19v2H.5z"/>' + txt('C:\\_', 8, 11, 6, '#fff'),
  putty: '<g stroke="#ddd" stroke-width="1.500"><rect x="9" y="1" width="9" height="7" fill="#0a12a8"/><rect x="2" y="10" width="9" height="7" fill="#0a12a8"/><path d="M8 9.500h11M1 18.500h12"/></g><path fill="#ffec1c" d="m13 5-7 6 4-.5L5 16l8-7-4 .5z"/>'
};
const icon = n => `<svg class="w-5 h-5 shrink-0" viewBox="0 0 20 20">${art[n]}</svg>`;

// [icon, label, slot width]
const bookmarks = [['chev','',35],['pennant','',35],['heart','',35],['bit','',35],['slashes','',35],['leaf','',35],['lin','',35],['ed','Ed',57],['puzzle','',35],['hex','',35],['zed','',36],['globe','CodingBat',109],['edx','',35],['tt','',34],['bee','',36],['root','',35],['gpt','ChatGPT',97],['globe','AWS',75],['globe','CLI',60],['redcloud','',35],['syslog','Syslog',83],['guru','guru',70],['pn','Subnetting',112],['boxdoc',"Doc's",76],['cube','Sign-In',87],['restart','re-start',88],['aws','inquiries',96],['aws','tutorials',167],['more','',36],['folder','Andere bladwijzers',146]];
document.getElementById('bookmarks').innerHTML = bookmarks.map(([i, t, w]) =>
  `<div class="flex items-center gap-[5px] shrink-0 whitespace-nowrap" style="width:${w}px">${icon(i)}${t ? `<span class="mt-[2px]">${t}</span>` : ''}</div>`).join('');

const cols = [['Volume ID',250],['Type',125],['Size',150],['IOPS',150],['Throughput',175],['Snapshot',175],['Created',275],['Availability Zone',225],['Volume state',175],['Alarm status',175]];
document.getElementById('thead').innerHTML = cols.map(([t, w]) =>
  `<div class="h-[25px] shrink-0 border-l border-[#687078] pl-[19.500px] pr-[17px] flex items-center justify-between whitespace-nowrap" style="width:${w}px">${t}<svg class="w-[14px] h-[12px] text-[#687078]"><use href="#sort"/></svg></div>`).join('');

const status = (t, c) => `<span class="flex items-center gap-[4px] tracking-[-0.200px] ${c}"><svg class="w-5 h-5"><use href="#check"/></svg>${t}</span>`;
const green = 'text-[#1d8102]', blue = 'text-[#0073bb]';
const rows = [
  ['vol-05c3a5e39f0591260','8 GiB','snap-089d19b…','10:44',status('In-use', green),'tracking-[0.120px]'],
  ['vol-033f7d521eeda0bdc','1 GiB','-','10:46',status('In-use', green),'tracking-[0px]'],
  ['vol-0dabce2cc9b6b0bd0','1 GiB','snap-0370935…','13:24',status('Available', blue),'tracking-[-0.130px]']];
const rowClass = ['h-[39px] bg-white border-b border-[#eaeded]','h-[40px] bg-white','h-[39px] bg-[#f1faff] border-y border-[#0073bb]'];
document.getElementById('tbody').innerHTML = rows.map((r, n) => {
  const cells = [`<a class="text-[#0073bb] ${r[5]}">${r[0]}</a>`,'gp3',r[1],'3000','125',`<span class="tracking-[0.150px]">${r[2]}</span>`,`<span class="tracking-[0.200px]">2023/07/02 ${r[3]} GMT+2</span>`,'eu-central-1b',r[4],'No alarms'];
  return `<div class="flex items-center pl-[6px] overflow-hidden tracking-[-0.050px] ${rowClass[n]}">` + cells.map((c, i) =>
    `<div class="shrink-0 pl-[20.500px] whitespace-nowrap" style="width:${cols[i][1]}px">${c}</div>`).join('') + '</div>';
}).join('');

const copy = '<svg class="w-[18px] h-[18px] ml-[6px] mr-[11px] text-[#545b64]"><use href="#copy"/></svg>';
const details = [
  [['Volume ID', `${copy}<a class="text-[#0073bb] tracking-[-0.130px]">vol-0dabce2cc9b6b0bd0</a>`],
   ['AWS Compute Optimizer finding', `<div class="leading-[27px] text-[#687078]"><div class="flex items-center whitespace-nowrap"><svg class="w-5 h-5 mr-[5px]"><use href="#info"/></svg>Opt-in to AWS Compute Optimizer for recomme</div><div class="flex items-center whitespace-nowrap tracking-[-0.350px]">ndations. |<a class="text-[#0073bb] font-medium flex items-center gap-[5px] ml-[4px]">Learn more<svg class="w-[18px] h-[18px]" viewBox="0 0 18 18"><path fill="none" stroke="currentColor" stroke-width="2.200" d="M8 1.500H1.500v15h15V10M11 1.500h5.500V7M16 2 7 11"/></svg></a></div></div>`],
   ['Encryption','Not encrypted'],['Fast snapshot restored','']],
  [['Size', `${copy}1 GiB`],['Volume state', status('Available', blue)],['KMS key ID','-'],['Snapshot','']],
  [['Type','gp3'],['IOPS','3000'],['KMS key alias','-'],['Availability Zone','']],
  [['Volume status', status('Okay', green)],['Throughput','125'],['KMS key ARN','-'],['Created','']]];
const slot = ['h-[75px]','h-[103px]','h-[75px]','h-[75px]'];
const lead = ['leading-[28px]','leading-[28px]','leading-[27px]','leading-[27px]'];
document.getElementById('details').innerHTML = details.map((c, i) =>
  `<div class="shrink-0 pt-[9px] tracking-[-0.180px] ${i ? 'w-[436.500px] border-l border-[#eaeded] pl-[10px]' : 'w-[426px]'}">` + c.map(([l, v], r) =>
    `<div class="${slot[r]}"><div class="${lead[r]} text-[#545b64] whitespace-nowrap">${l}</div><div class="leading-[27px] flex items-center">${v}</div></div>`).join('') + '</div>').join('');

const apps = ['clock','tv','photo','cup','bkmk','tele','discord','files','pdf','note','word','excel','ppt','outlook','chrome','firefox','code','ps','cmd','git','fin','slack','zoom','teams','cmd2','putty'];
const open = ['files','code','slack','cmd2','putty'];
document.getElementById('taskbar').innerHTML =
  ['win','find'].map(n => `<div class="w-[45px] flex items-center justify-center">${icon(n)}</div>`).join('') + '<div class="w-[3px]"></div>' +
  apps.map(n => `<div class="w-[46px] relative flex items-center justify-center ${n === 'firefox' ? 'bg-[#64676b] border-b-[3px] border-[#76b9ed] pt-[3px]' : ''}">${icon(n)}${open.includes(n) ? '<div class="absolute bottom-0 left-[5px] w-[36px] h-[3px] bg-[#76b9ed]"></div>' : ''}</div>`).join('');
</script>
</body>
</html>
